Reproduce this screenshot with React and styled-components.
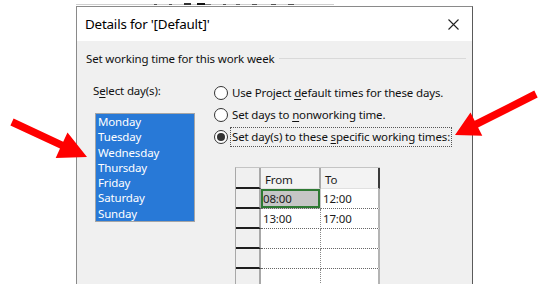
import React from "react";
import styled, { createGlobalStyle } from "styled-components";

const GlobalStyle = createGlobalStyle`
  html, body { margin: 0; padding: 0; background: #fff; }
  body { font-family: "Noto Sans", "Open Sans", sans-serif; color: #000; }
`;

const Page = styled.div`
  position: relative;
  width: 544px;
  height: 284px;
  overflow: hidden;
  background: #fff;
`;

const BackStrip = styled.div`
  height: 6px;
  margin-left: 76px;
  width: 264px;
  display: flex;
  align-items: flex-end;
  box-sizing: border-box;
`;

const Mark = styled.div`
  width: ${(p) => p.w}px;
  height: ${(p) => p.h || 1}px;
  margin-bottom: 1px;
  background: ${(p) => p.c || "#b8b8b8"};
`;

const Dialog = styled.div`
  margin-left: 76px;
  width: 397px;
  height: 278px;
  box-sizing: border-box;
  border: 1px solid #8a8a8a;
  border-right-color: #5a5a5a;
  border-bottom: none;
  display: flex;
  flex-direction: column;
`;

const TitleBar = styled.div`
  height: 34px;
  flex: none;
  background: #fff;
  display: flex;
  align-items: center;
  justify-content: space-between;
  padding: 0 13px 0 8px;
`;

const Title = styled.div`
  font-size: 13.4px;
  letter-spacing: -0.2px;
  color: #000;
`;

const Body = styled.div`
  flex: 1;
  background: #f0f0f0;
  display: flex;
  flex-direction: column;
  font-size: 11.5px;
  letter-spacing: -0.15px;
  color: #111;
`;

const SectionHeader = styled.div`
  margin-top: 9px;
  height: 16px;
  display: flex;
  align-items: center;
  padding: 0 6px 0 9px;
`;

const SectionLine = styled.div`
  flex: 1;
  height: 1px;
  background: #d9d9d9;
  margin-left: 5px;
`;

const Columns = styled.div`
  display: flex;
  margin-top: 16px;
`;

const LeftCol = styled.div`
  margin-left: 16px;
  width: 121px;
  display: flex;
  flex-direction: column;
`;

const Label = styled.div`
  height: 18px;
  line-height: 18px;
`;

const U = styled.span`
  text-decoration: underline;
  text-underline-offset: 2px;
`;

const ListBox = styled.div`
  margin: 13px 0 0 2px;
  width: 100px;
  height: 109px;
  box-sizing: border-box;
  background: #2879d7;
  border: 1px solid #a5a5a5;
  padding-left: 2px;
`;

const ListItem = styled.div`
  height: 15.3px;
  line-height: 15.3px;
  color: #fff;
  font-size: 11.5px;
`;

const RightCol = styled.div`
  display: flex;
  flex-direction: column;
`;

const RadioRow = styled.div`
  height: 22px;
  display: flex;
  align-items: center;
`;

const RadioCircle = styled.div`
  width: 14px;
  height: 14px;
  box-sizing: border-box;
  border: 1px solid #333;
  border-radius: 50%;
  background: #fff;
  display: flex;
  align-items: center;
  justify-content: center;
  flex: none;
  &::after {
    content: "";
    display: ${(p) => (p.checked ? "block" : "none")};
    width: 8px;
    height: 8px;
    border-radius: 50%;
    background: #333;
  }
`;

const RadioLabel = styled.span`
  margin-left: 2px;
  padding: 1px 1px 2px;
  border: 1px dotted ${(p) => (p.focused ? "#555" : "transparent")};
  line-height: 15px;
`;

const Table = styled.div`
  margin: 19px 0 0 21px;
  display: grid;
  grid-template-columns: 25px 60px 59px;
  grid-template-rows: 21px repeat(5, 20px);
  border-left: 1px solid #a8a8a8;
  border-top: 1px solid #c4c4c4;
  width: max-content;
`;

const Cell = styled.div`
  box-sizing: border-box;
  font-size: 11.5px;
  padding-left: 2px;
  display: flex;
  align-items: center;
  color: #1b1b1b;
  ${(p) =>
    p.kind === "corner" &&
    `background:#f0f0f0; border-right:2px solid #a8a8a8; border-bottom:2px solid #1e1e1e;`}
  ${(p) =>
    p.kind === "head" &&
    `background:#f3f3f3; border-bottom:1px solid #e0e0e0; padding-top:3px; padding-left:4px; border-right:2px solid ${
      p.last ? "#3a3a3a" : "#a8a8a8"
    };`}
  ${(p) =>
    p.kind === "rowhead" &&
    `background:#f0f0f0; border-right:2px solid #a8a8a8; border-bottom:2px solid #1e1e1e;`}
  ${(p) =>
    p.kind === "data" &&
    `background:#fff; border-bottom:1px dotted #666; border-right:${
      p.last ? "2px solid #b4b4b4" : "1px dotted #888"
    };`}
  ${(p) =>
    p.selected &&
    `background:#c6c6c6; box-shadow: inset 0 0 0 2px #2f7a34; border-right-color: transparent;`}
`;

const Overlay = styled.svg`
  position: absolute;
  left: 0;
  top: 0;
  pointer-events: none;
`;

const days = ["Monday", "Tuesday", "Wednesday", "Thursday", "Friday", "Saturday", "Sunday"];
const rows = [
  ["08:00", "12:00"],
  ["13:00", "17:00"],
  ["", ""],
  ["", ""],
  ["", ""],
];

const strip = [
  [78, 1, "#cfcfcf"],
  [3, 1, "#555"],
  [12, 1, "#cfcfcf"],
  [3, 1, "#555"],
  [12, 1, "#cfcfcf"],
  [7, 2, "#333"],
  [6, 1, "#cfcfcf"],
  [8, 2, "#111"],
  [6, 1, "#777"],
  [12, 1, "#cfcfcf"],
  [3, 1, "#555"],
  [10, 1, "#cfcfcf"],
  [4, 1, "#666"],
  [12, 1, "#cfcfcf"],
  [5, 1, "#555"],
  [14, 1, "#cfcfcf"],
  [5, 1, "#555"],
  [12, 1, "#cfcfcf"],
  [6, 1, "#555"],
  [40, 1, "#cfcfcf"],
];

export default function App() {
  return (
    <Page>
      <GlobalStyle />
      <BackStrip>
        {strip.map(([w, h, c], i) => (
          <Mark key={i} w={w} h={h} c={c} />
        ))}
      </BackStrip>
      <Dialog>
        <TitleBar>
          <Title>Details for '[Default]'</Title>
          <svg width="11" height="11" viewBox="0 0 11 11">
            <path d="M0.5 0.5 L10.5 10.5 M10.5 0.5 L0.5 10.5" stroke="#222" strokeWidth="1.1" />
          </svg>
        </TitleBar>
        <Body>
          <SectionHeader>
            <span>Set working time for this work week</span>
            <SectionLine />
          </SectionHeader>
          <Columns>
            <LeftCol>
              <Label>
                S<U>e</U>lect day(s):
              </Label>
              <ListBox>
                {days.map((d) => (
                  <ListItem key={d}>{d}</ListItem>
                ))}
              </ListBox>
            </LeftCol>
            <RightCol>
              <RadioRow>
                <RadioCircle />
                <RadioLabel>
                  Use Project <U>d</U>efault times for these days.
                </RadioLabel>
              </RadioRow>
              <RadioRow>
                <RadioCircle />
                <RadioLabel>
                  Set days to <U>n</U>onworking time.
                </RadioLabel>
              </RadioRow>
              <RadioRow>
                <RadioCircle checked />
                <RadioLabel focused>
                  Set day(s) to these <U>s</U>pecific working times:
                </RadioLabel>
              </RadioRow>
              <Table>
                <Cell kind="corner" />
                <Cell kind="head">From</Cell>
                <Cell kind="head" last>
                  To
                </Cell>
                {rows.map((r, i) => (
                  <React.Fragment key={i}>
                    <Cell kind="rowhead" />
                    <Cell kind="data" selected={i === 0}>
                      {r[0]}
                    </Cell>
                    <Cell kind="data" last>
                      {r[1]}
                    </Cell>
                  </React.Fragment>
                ))}
              </Table>
            </RightCol>
          </Columns>
        </Body>
      </Dialog>
      <Overlay width="544" height="284" viewBox="0 0 544 284">
        <polygon
          fill="#ff0000"
          points="13.6,118.6 63.2,141.8 67.5,132.5 87,157 55.7,157.9 60,148.6 10.4,125.4"
        />
        <polygon
          fill="#ff0000"
          points="534.3,90.6 474.7,120.8 470.5,112.6 455,135 482.3,135.8 478.1,127.6 537.7,97.4"
        />
      </Overlay>
    </Page>
  );
}
